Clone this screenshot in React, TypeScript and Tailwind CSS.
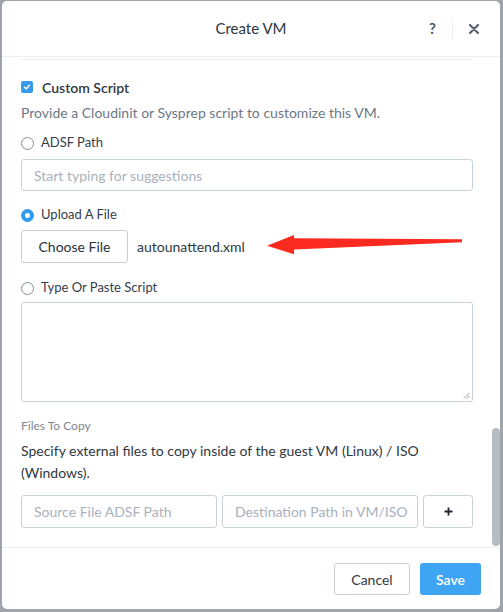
import React from 'react';

const font = { fontFamily: 'Lato, "Noto Sans", sans-serif' };

const Radio: React.FC<{ checked?: boolean; label: string }> = ({ checked, label }) => (
  <div className="flex h-[20px] items-center">
    {checked ? (
      <span className="flex h-[13px] w-[13px] items-center justify-center rounded-full bg-[#2f9cf1]">
        <span className="h-[5px] w-[5px] rounded-full bg-white" />
      </span>
    ) : (
      <span className="h-[13px] w-[13px] rounded-full border border-[#858d97] bg-white" />
    )}
    <span className="ml-[7px] text-[13px] text-[#36404b]">{label}</span>
  </div>
);

const App: React.FC = () => {
  return (
    <div
      className="h-[612px] w-[503px] bg-[#9fa4ab] pt-[1px] pl-[2px] pr-[3px] pb-[3px]"
      style={font}
    >
      <div className="relative flex h-[608px] flex-col overflow-hidden rounded-[5px] bg-white">
        {/* Header */}
        <div className="relative flex h-[56px] shrink-0 items-center justify-center border-b border-[#eceef1]">
          <span className="text-[15px] text-[#2d3540]">Create VM</span>
          <div className="absolute right-[21px] top-0 flex h-full items-center">
            <span className="text-[15px] font-bold text-[#4d5763]">?</span>
            <span className="mx-[16px] h-[20px] w-px bg-[#eceef1]" />
            <svg width="10" height="10" viewBox="0 0 10 10">
              <path d="M1 1L9 9M9 1L1 9" stroke="#56626f" strokeWidth="2.2" strokeLinecap="round" />
            </svg>
          </div>
        </div>

        {/* Body */}
        <div className="relative h-[490px] shrink-0 pl-[19px]">
          <div className="w-[452px]">
            <div className="mt-[2px] h-px w-[451px] bg-[#eef0f3]" />

            <div className="mt-[17px] flex h-[20px] items-center">
              <span className="flex h-[12px] w-[12px] items-center justify-center rounded-[2px] bg-[#3a9bec]">
                <svg width="8" height="8" viewBox="0 0 8 8">
                  <path d="M1.5 4.2L3.2 5.8L6.5 2.2" fill="none" stroke="white" strokeWidth="1.4" strokeLinecap="round" strokeLinejoin="round" />
                </svg>
              </span>
              <span className="ml-[9px] text-[14px] font-semibold text-[#2f3842]">Custom Script</span>
            </div>

            <p className="mt-[6px] h-[20px] text-[14px] leading-[20px] text-[#6c7886]">
              Provide a Cloudinit or Sysprep script to customize this VM.
            </p>

            <div className="mt-[10px]">
              <Radio label="ADSF Path" />
            </div>

            <div className="mt-[6px] flex h-[32px] items-center rounded-[3px] border border-[#cbd1d9] px-[12px]">
              <span className="text-[14px] text-[#a9b1bd]">Start typing for suggestions</span>
            </div>

            <div className="mt-[14px]">
              <Radio checked label="Upload A File" />
            </div>

            <div className="mt-[5px] flex h-[33px] items-center">
              <button className="flex h-[33px] w-[107px] items-center justify-center rounded-[3px] border border-[#c9ced6] bg-white text-[14px] text-[#2b333d]">
                Choose File
              </button>
              <span className="ml-[9px] text-[14px] text-[#2f3842]">autounattend.xml</span>
            </div>

            <div className="mt-[15px]">
              <Radio label="Type Or Paste Script" />
            </div>

            <div className="relative mt-[4px] h-[100px] rounded-[3px] border border-[#cbd1d9]">
              <svg className="absolute bottom-[2px] right-[2px]" width="7" height="7" viewBox="0 0 7 7">
                <path d="M6.5 1L1 6.5M6.5 4L4 6.5" stroke="#8a929c" strokeWidth="0.9" />
              </svg>
            </div>

            <p className="mt-[14px] h-[20px] text-[12px] leading-[20px] text-[#7d8896]">Files To Copy</p>

            <p className="mt-[4px] text-[14px] leading-[22px] text-[#2f3842]">
              Specify external files to copy inside of the guest VM (Linux) / ISO (Windows).
            </p>

            <div className="mt-[11px] flex h-[33px] gap-[5px]">
              <div className="flex w-[196px] items-center overflow-hidden whitespace-nowrap rounded-[3px] border border-[#cbd1d9] px-[12px]">
                <span className="text-[14px] text-[#a9b1bd]">Source File ADSF Path</span>
              </div>
              <div className="flex w-[196px] items-center overflow-hidden whitespace-nowrap rounded-[3px] border border-[#cbd1d9] px-[12px]">
                <span className="text-[14px] text-[#a9b1bd]">Destination Path in VM/ISO</span>
              </div>
              <button className="flex flex-1 items-center justify-center rounded-[3px] border border-[#cbd1d9] bg-white">
                <svg width="9" height="9" viewBox="0 0 9 9">
                  <path d="M4.5 0.5V8.5M0.5 4.5H8.5" stroke="#1f2630" strokeWidth="1.8" />
                </svg>
              </button>
            </div>
          </div>

          {/* scrollbar */}
          <div className="absolute right-0 top-[371px] h-[118px] w-[8px] rounded-full bg-[#b7bbc2]" />
        </div>

        {/* Footer */}
        <div className="flex h-[62px] shrink-0 items-start justify-end gap-[10px] border-t border-[#eceef1] pr-[19px] pt-[15px]">
          <button className="h-[32px] w-[76px] rounded-[3px] border border-[#c9ced6] bg-white text-[14px] text-[#2f3842]">
            Cancel
          </button>
          <button className="h-[32px] w-[61px] rounded-[3px] bg-[#3ea4f4] text-[14px] font-semibold text-white">
            Save
          </button>
        </div>

        {/* red annotation arrow */}
        <svg className="absolute left-[258px] top-[229px]" width="210" height="30" viewBox="0 0 210 30">
          <polygon
            points="7,15.7 34,5 34,8.3 202,9.3 202,12.3 34,19.5 34,24.3"
            fill="#fb2a20"
          />
        </svg>
      </div>
    </div>
  );
};

export default App;
